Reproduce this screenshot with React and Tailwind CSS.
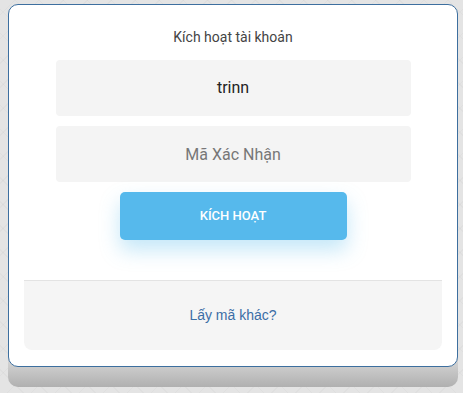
export default function App() {
  return (
    <div className="h-[393px] w-full overflow-hidden bg-[#e4e4e4] bg-[repeating-linear-gradient(45deg,transparent_0_16px,rgba(0,0,0,0.025)_16px_17px),repeating-linear-gradient(-45deg,transparent_0_16px,rgba(0,0,0,0.025)_16px_17px)] pt-[4px] pl-[8px]">
      <div className="w-[450px]">
        <div className="relative z-10 flex flex-col items-center rounded-[10px] border border-[#3d6f9f] bg-white px-[15px] pb-[16px] font-['Roboto',sans-serif]">
          <h2 className="mt-[22px] text-[14px] leading-[20px] text-[#444]">Kích hoạt tài khoản</h2>
          <div className="mt-[13px] flex h-[56px] w-[355px] items-center justify-center rounded-[4px] bg-[#f4f4f4] text-[16px] text-[#222]">
            trinn
          </div>
          <input
            className="mt-[10px] h-[56px] w-[355px] rounded-[4px] bg-[#f4f4f4] text-center text-[16px] text-[#222] outline-none placeholder:text-[#777]"
            placeholder="Mã Xác Nhận"
          />
          <button className="mt-[10px] h-[48px] w-[227px] rounded-[5px] bg-[#56b9ec] text-[13px] font-medium uppercase text-white shadow-[0_10px_20px_rgba(86,185,236,0.35)]">
            Kích hoạt
          </button>
          <div className="mt-[40px] flex h-[70px] w-full items-center justify-center rounded-b-[8px] border-t border-[#e3e3e3] bg-[#f5f5f5]">
            <a href="#" className="font-['Liberation_Sans',sans-serif] text-[14px] text-[#3b6ea6]">
              Lấy mã khác?
            </a>
          </div>
        </div>
        <div className="-mt-[12px] h-[32px] rounded-b-[10px] bg-gradient-to-b from-[#dcdcdc] to-[#b0b0b0]" />
      </div>
    </div>
  );
}
